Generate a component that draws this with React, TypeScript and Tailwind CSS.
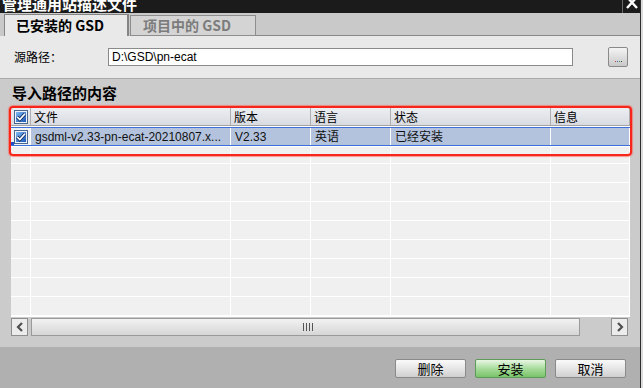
import React from 'react';

const cjk = { fontFamily: '"Noto Sans CJK SC", "Noto Sans", sans-serif' };
const mixed = { fontFamily: '"Liberation Sans", "Noto Sans CJK SC", sans-serif' };

const colWidths = ['w-[20px]', 'w-[200px]', 'w-[80px]', 'w-[80px]', 'w-[160px]', 'w-[79px]'];

const CheckBox = () => (
  <svg width="14" height="14" viewBox="0 0 14 14">
    <defs>
      <linearGradient id="cbg" x1="0" y1="0" x2="1" y2="1">
        <stop offset="0" stopColor="#7fb8f0" />
        <stop offset="1" stopColor="#1a56b8" />
      </linearGradient>
    </defs>
    <rect x="0.5" y="0.5" width="13" height="13" fill="#eef2f8" stroke="#4a6790" />
    <rect x="2" y="2" width="10" height="10" fill="url(#cbg)" />
    <path d="M3.2 7 L5.8 9.6 L11 3.8" fill="none" stroke="#0c2a60" strokeWidth="3.2" />
    <path d="M3.2 7 L5.8 9.6 L11 3.8" fill="none" stroke="#ffffff" strokeWidth="1.7" />
  </svg>
);

const DialogButton = ({ label, primary }: { label: string; primary?: boolean }) => (
  <button
    className={
      primary
        ? 'w-[71px] h-[19px] rounded-[2px] border border-[#5e9a58] bg-gradient-to-b from-[#e8f6e4] via-[#a8dc9c] to-[#78c468] text-[13px] leading-[17px] text-black'
        : 'w-[71px] h-[19px] rounded-[2px] border border-[#8a8a8a] bg-gradient-to-b from-[#fafafa] via-[#e6e6e6] to-[#cfcfcf] text-[13px] leading-[17px] text-black'
    }
    style={cjk}
  >
    {label}
  </button>
);

const BlankRow = ({ h }: { h: string }) => (
  <div className={`flex ${h} shrink-0`}>
    {colWidths.map((w, i) => (
      <div key={i} className={`${w} h-full bg-[#f0f0f0] border-r border-white`} />
    ))}
  </div>
);

export default function App() {
  const headers = ['文件', '版本', '语言', '状态', '信息'];
  return (
    <div className="w-[643px] h-[388px] flex bg-[#cbcbcb] overflow-hidden">
      <div className="w-[640px] flex flex-col">
        {/* title bar */}
        <div className="h-[13px] bg-[#1b1b1b] flex overflow-hidden shrink-0">
          <div className="flex-1 -mt-[6px] pl-[2px] text-[15px] leading-[20px] font-bold text-white" style={cjk}>
            管理通用站描述文件
          </div>
          <div className="w-[18px] h-full border-l border-[#6a6a6a] flex justify-end pr-[2px]">
            <svg width="12" height="13" viewBox="0 0 12 13">
              <path d="M1 -3 L11 8 M11 -3 L1 8" stroke="#ffffff" strokeWidth="2.4" />
            </svg>
          </div>
        </div>

        {/* tabs */}
        <div className="h-[23px] bg-[#c9c9c9] flex items-end pl-[4px] shrink-0">
          <div className="h-[22px] w-[125px] bg-[#e9e9e9] border-l border-t border-r-2 border-[#858585] flex items-center pl-[11px] text-[14px] font-bold text-black" style={cjk}>
            已安装的 GSD
          </div>
          <div className="h-[21px] w-[126px] ml-[1px] bg-[#d4d4d4] border border-[#8e8e8e] flex items-center pl-[12px] text-[14px] font-bold text-[#7c7c7c]" style={cjk}>
            项目中的 GSD
          </div>
          <div className="flex-1 h-[1px] bg-[#8a8a8a]" />
        </div>

        {/* source path */}
        <div className="h-[43px] bg-[#e9e9e9] border-b border-[#a9a9a9] flex items-center pl-[14px] shrink-0">
          <div className="w-[94px] text-[12px] text-black" style={cjk}>
            源路径：
          </div>
          <div className="w-[465px] h-[18px] bg-white border border-[#8a8a8a] flex items-center pl-[3px] text-[12px] text-black" style={mixed}>
            D:\GSD\pn-ecat
          </div>
          <div className="ml-[35px] w-[20px] h-[20px] rounded-[2px] border border-[#8a8a8a] bg-gradient-to-b from-[#f4f4f4] to-[#c9c9c9] flex items-end justify-center pb-[4px] gap-[1px]">
            <span className="w-[1px] h-[1px] bg-[#c04040]" />
            <span className="w-[1px] h-[1px] bg-[#4060c0]" />
            <span className="w-[1px] h-[1px] bg-[#40a040]" />
            <span className="w-[1px] h-[1px] bg-[#404040]" />
          </div>
        </div>

        {/* import contents */}
        <div className="h-[268px] bg-[#cbcbcb] flex flex-col shrink-0 relative">
          <div className="h-[29px] pl-[12px] pt-[3px] text-[15px] font-bold text-black" style={cjk}>
            导入路径的内容
          </div>

          <div className="ml-[11px] w-[619px] h-[209px] bg-white flex flex-col overflow-hidden">
            {/* header */}
            <div className="flex h-[18px] shrink-0 border-b border-[#a3a3a3] bg-gradient-to-b from-[#eceef2] to-[#d8dbe1]">
              <div className="w-[20px] h-full border-r border-[#b0b0b0] flex items-center justify-center">
                <CheckBox />
              </div>
              {headers.map((h, i) => (
                <div
                  key={h}
                  className={`${colWidths[i + 1]} h-full border-r border-[#b0b0b0] flex items-center pl-[3px] text-[12px] text-black`}
                  style={cjk}
                >
                  {h}
                </div>
              ))}
            </div>

            {/* selected row */}
            <div className="flex h-[19px] mt-[1px] shrink-0 border-y border-[#3d6fd8]">
              <div className="w-[20px] h-full bg-[#eef0f4] border-r border-white flex items-center justify-center relative">
                <CheckBox />
                <span className="absolute left-0 bottom-0 w-[3px] h-[3px] bg-[#2050c8]" />
              </div>
              {['gsdml-v2.33-pn-ecat-20210807.x...', 'V2.33', '英语', '已经安装', ''].map((t, i) => (
                <div
                  key={i}
                  className={`${colWidths[i + 1]} h-full bg-[#b4c3dd] border-r border-white flex items-center pl-[4px] text-[12px] text-[#111]`}
                  style={mixed}
                >
                  {t}
                </div>
              ))}
            </div>

            <div className="flex flex-col gap-[1px] mt-[1px]">
              <BlankRow h="h-[16px]" />
              {Array.from({ length: 8 }).map((_, i) => (
                <BlankRow key={i} h="h-[18px]" />
              ))}
            </div>
          </div>

          {/* horizontal scrollbar */}
          <div className="ml-[11px] mt-[1px] h-[18px] flex items-center shrink-0">
            <div className="w-[17px] h-[18px] border border-[#8e8e8e] bg-[#ececec] flex items-center justify-center">
              <svg width="8" height="10" viewBox="0 0 8 10">
                <path d="M6 1 L2 5 L6 9" fill="none" stroke="#505050" strokeWidth="2.2" />
              </svg>
            </div>
            <div className="ml-[3px] w-[549px] h-[18px] border border-[#9a9a9a] bg-gradient-to-b from-[#f2f2f2] to-[#d6d6d6] flex items-center pl-[271px] gap-[1px]">
              <span className="w-[1px] h-[8px] bg-[#555]" />
              <span className="w-[1px] h-[8px] bg-[#555] ml-[1px]" />
              <span className="w-[1px] h-[8px] bg-[#555] ml-[1px]" />
              <span className="w-[1px] h-[8px] bg-[#555] ml-[1px]" />
            </div>
            <div className="ml-[31px] w-[17px] h-[18px] border border-[#8e8e8e] bg-[#ececec] flex items-center justify-center">
              <svg width="8" height="10" viewBox="0 0 8 10">
                <path d="M2 1 L6 5 L2 9" fill="none" stroke="#505050" strokeWidth="2.2" />
              </svg>
            </div>
          </div>

          {/* red annotation frame */}
          <div className="absolute left-[9px] top-[27px] w-[623px] h-[50px] rounded-[4px] border-2 border-[#f8261a] shadow-[0_0_1px_1px_rgba(255,90,80,0.6)] pointer-events-none" />
        </div>

        {/* footer */}
        <div className="flex-1 bg-[#b0b0b0] flex justify-end items-start pt-[12px] pr-[14px] gap-[9px]">
          <DialogButton label="删除" />
          <DialogButton label="安装" primary />
          <DialogButton label="取消" />
        </div>
      </div>
      <div className="w-[1px] bg-[#2e2e2e]" />
      <div className="w-[2px] bg-[#dcdcdc]" />
    </div>
  );
}
